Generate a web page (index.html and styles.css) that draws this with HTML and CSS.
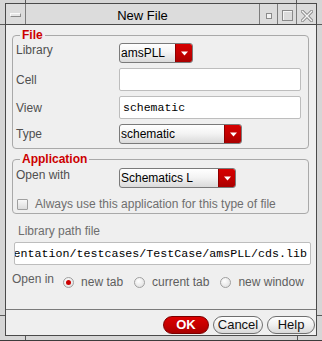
FILE: index.html
```html
<!DOCTYPE html>
<html>
<head>
<meta charset="utf-8">
<title>New File</title>
<link rel="stylesheet" href="styles.css">
</head>
<body>
<div class="frame">
  <span class="tick tick-v tick-t1"></span>
  <span class="tick tick-v tick-t2"></span>
  <span class="tick tick-v tick-b1"></span>
  <span class="tick tick-v tick-b2"></span>
  <span class="tick tick-h tick-l1"></span>
  <span class="tick tick-h tick-l2"></span>
  <span class="tick tick-h tick-r1"></span>
  <span class="tick tick-h tick-r2"></span>
  <div class="win">
    <div class="titlebar">
      <div class="tb-seg tb-menu"><span class="menu-bar"></span></div>
      <div class="tb-seg tb-title">New File</div>
      <div class="tb-seg tb-min"><span class="sq-small"></span></div>
      <div class="tb-seg tb-max"><span class="sq-big"></span></div>
      <div class="tb-seg tb-close">
        <svg width="12" height="12" viewBox="0 0 12 12">
          <path d="M1.5 1.5 L10.5 10.5 M10.5 1.5 L1.5 10.5" stroke="#8c8c8c" stroke-width="3.2" stroke-linecap="square" fill="none"/>
          <path d="M1.5 1.5 L10.5 10.5 M10.5 1.5 L1.5 10.5" stroke="#f4f4f4" stroke-width="1.4" stroke-linecap="square" fill="none"/>
        </svg>
      </div>
    </div>
    <div class="content">
      <fieldset class="group group-file">
        <legend>File</legend>
        <div class="form">
          <span class="lbl lbl-top">Library</span>
          <div class="combo combo-lib"><span class="combo-text">amsPLL</span><span class="combo-arrow"><svg width="7" height="5" viewBox="0 0 7 5"><path d="M0 0.5 H7 L3.5 4.5 Z" fill="#fff"/></svg></span></div>
          <span class="lbl">Cell</span>
          <div class="field"></div>
          <span class="lbl">View</span>
          <div class="field">schematic</div>
          <span class="lbl">Type</span>
          <div class="combo combo-type"><span class="combo-text">schematic</span><span class="combo-arrow"><svg width="7" height="5" viewBox="0 0 7 5"><path d="M0 0.5 H7 L3.5 4.5 Z" fill="#fff"/></svg></span></div>
        </div>
      </fieldset>
      <fieldset class="group group-app">
        <legend>Application</legend>
        <div class="form">
          <span class="lbl lbl-top">Open with</span>
          <div class="combo combo-app"><span class="combo-text">Schematics L</span><span class="combo-arrow"><svg width="7" height="5" viewBox="0 0 7 5"><path d="M0 0.5 H7 L3.5 4.5 Z" fill="#fff"/></svg></span></div>
        </div>
        <div class="check-row"><span class="checkbox"></span><span class="check-text">Always use this application for this type of file</span></div>
      </fieldset>
      <div class="path-label">Library path file</div>
      <div class="path-field"><span>entation/testcases/TestCase/amsPLL/cds.lib</span></div>
      <div class="open-row">
        <span class="open-label">Open in</span>
        <div class="radios">
          <span class="opt"><span class="radio on"></span>new tab</span>
          <span class="opt"><span class="radio"></span>current tab</span>
          <span class="opt"><span class="radio"></span>new window</span>
        </div>
      </div>
      <div class="btnbar">
        <button class="btn btn-ok">OK</button>
        <button class="btn btn-cancel">Cancel</button>
        <button class="btn btn-help">Help</button>
      </div>
    </div>
  </div>
</div>
</body>
</html>
```
FILE: styles.css
```css
* { box-sizing: border-box; }
html, body { margin: 0; padding: 0; }
body {
  width: 322px;
  height: 341px;
  overflow: hidden;
  font-family: "Liberation Sans", Arial, sans-serif;
  font-size: 12px;
  line-height: 14px;
  color: #505050;
}
.frame {
  position: relative;
  width: 322px;
  height: 341px;
  background: #d6d6d6;
  padding: 3px 5px 4px 5px;
  border-bottom: 1px solid #3c3c3c;
}
.tick { position: absolute; background: #5a5a5a; }
.tick-v { width: 1px; }
.tick-h { height: 1px; width: 5px; }
.tick-t1 { left: 25px; top: 0; height: 3px; }
.tick-t2 { left: 296px; top: 0; height: 3px; }
.tick-b1 { left: 25px; top: 336px; height: 4px; }
.tick-b2 { left: 297px; top: 336px; height: 4px; }
.tick-l1 { left: 0; top: 24px; }
.tick-l2 { left: 0; top: 315px; }
.tick-r1 { left: 317px; top: 24px; }
.tick-r2 { left: 317px; top: 315px; }

.win {
  height: 333px;
  border: 1px solid #4a4a4a;
  display: flex;
  flex-direction: column;
  background: #efefef;
}
.titlebar {
  flex: none;
  display: flex;
  height: 21px;
  border-bottom: 1px solid #4a4a4a;
  background: #dcdcdc;
}
.tb-seg {
  display: flex;
  align-items: center;
  justify-content: center;
  border-right: 1px solid #7c7c7c;
  padding-top: 2px;
}
.tb-menu { width: 20px; }
.tb-title { width: 234px; font-size: 13px; line-height: 15px; color: #000; }
.tb-min { width: 18px; padding-top: 3px; }
.tb-max { width: 19px; padding-top: 3px; }
.tb-close { width: 19px; border-right: 0; padding-top: 3px; }
.menu-bar {
  width: 11px;
  height: 4px;
  background: #e6e6e6;
  border: 1px solid #8a8a8a;
  border-top-color: #fafafa;
  border-left-color: #fafafa;
}
.sq-small {
  width: 6px;
  height: 6px;
  border: 1px solid #8a8a8a;
  background: #f2f2f2;
}
.sq-big {
  width: 11px;
  height: 11px;
  border: 1px solid #8a8a8a;
  box-shadow: inset 1px 1px 0 #f6f6f6;
}

.content {
  flex: 1;
  display: flex;
  flex-direction: column;
}
.group {
  margin: 3px 7px 0 6px;
  padding: 1px 7px 4px 3px;
  border: 1px solid #a9a9a9;
  border-radius: 4px;
  min-width: 0;
}
.group-app { padding: 2px 7px 2px 3px; }
.group legend {
  margin-left: 4px;
  padding: 0 2px;
  font-size: 12px;
  line-height: 14px;
  font-weight: bold;
  color: #cc0000;
}
.form {
  display: grid;
  grid-template-columns: 103px 1fr;
  row-gap: 5px;
  align-items: center;
}
.lbl { color: #505050; }
.lbl-top { align-self: start; }

.combo {
  display: flex;
  height: 20px;
  border: 1px solid #7a7a7a;
  border-radius: 3px;
  background: linear-gradient(#ffffff, #f4f4f4 45%, #dadada);
  color: #000;
  overflow: hidden;
}
.combo-lib { width: 74px; }
.combo-type { width: 123px; }
.combo-app { width: 117px; }
.combo-text {
  flex: 1;
  padding-left: 1px;
  line-height: 18px;
  white-space: nowrap;
  overflow: hidden;
}
.combo-arrow {
  flex: none;
  width: 17px;
  display: flex;
  align-items: center;
  justify-content: center;
  background: linear-gradient(#d60000, #c00000 60%, #a80000);
  border-left: 1px solid #8c0000;
}

.field {
  height: 23px;
  border: 1px solid #bdbdbd;
  border-radius: 2px;
  background: #fff;
  padding: 0 3px;
  font-family: "Liberation Mono", "DejaVu Sans Mono", monospace;
  font-size: 11.5px;
  line-height: 21px;
  color: #000;
}

.check-row {
  display: flex;
  align-items: center;
  margin-top: 9px;
  padding-left: 1px;
  gap: 7px;
}
.checkbox {
  width: 11px;
  height: 11px;
  border: 1px solid #a0a0a0;
  border-radius: 1px;
  background: linear-gradient(#f8f8f8, #dcdcdc);
}
.check-text { color: #6e6e6e; }

.path-label {
  margin: 10px 0 0 12px;
  color: #6e6e6e;
}
.path-field {
  margin: 4px 0 0 8px;
  width: 297px;
  height: 23px;
  border: 1px solid #bdbdbd;
  border-radius: 2px;
  background: #fff;
  display: flex;
  justify-content: flex-end;
  overflow: hidden;
  white-space: nowrap;
  padding-right: 3px;
  font-family: "Liberation Mono", "DejaVu Sans Mono", monospace;
  font-size: 11.65px;
  line-height: 21px;
  color: #000;
}
.path-field span { flex: none; }

.open-row {
  display: flex;
  align-items: flex-start;
  margin: 7px 0 0 6px;
}
.open-label { color: #5e5e5e; }
.radios {
  display: flex;
  gap: 11px;
  margin: 3px 0 0 9px;
  color: #5e5e5e;
}
.opt {
  display: flex;
  align-items: center;
  gap: 7px;
}
.radio {
  width: 11px;
  height: 11px;
  border: 1px solid #a0a0a0;
  border-radius: 50%;
  background: radial-gradient(circle at 40% 35%, #ffffff, #dadada);
  display: flex;
  align-items: center;
  justify-content: center;
}
.radio.on::after {
  content: "";
  width: 5px;
  height: 5px;
  border-radius: 50%;
  background: #cc0000;
}

.btnbar {
  margin-top: auto;
  border-top: 1px solid #7a7a7a;
  padding: 6px 1px 1px 0;
  display: flex;
  justify-content: flex-end;
  gap: 4px;
}
.btn {
  height: 18px;
  padding: 0;
  margin: 0;
  border: 1px solid #6e6e6e;
  border-radius: 9px;
  background: linear-gradient(#fefefe, #f0f0f0 50%, #d8d8d8);
  font-family: "Liberation Sans", Arial, sans-serif;
  font-size: 13px;
  line-height: 16px;
  color: #111;
  text-align: center;
}
.btn-ok {
  width: 46px;
  background: linear-gradient(#dc0000, #c40000 55%, #a80000);
  border-color: #7a0000;
  color: #fff;
  font-weight: bold;
}
.btn-cancel { width: 50px; }
.btn-help { width: 48px; }
```
